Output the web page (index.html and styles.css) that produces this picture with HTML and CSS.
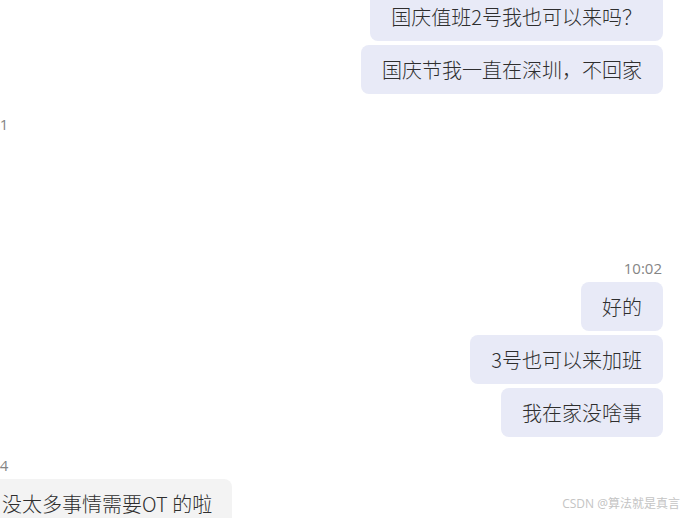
FILE: index.html
```html
<!DOCTYPE html>
<html lang="zh-CN">
<head>
<meta charset="utf-8">
<link rel="stylesheet" href="styles.css">
</head>
<body>
<div class="chat">
  <div class="group right first">
    <div class="bubble mine">国庆值班2号我也可以来吗？</div>
    <div class="bubble mine">国庆节我一直在深圳，不回家</div>
  </div>
  <div class="group left g-one">
    <div class="time">10:01</div>
  </div>
  <div class="group right g-two">
    <div class="time">10:02</div>
    <div class="bubble mine">好的</div>
    <div class="bubble mine">3号也可以来加班</div>
    <div class="bubble mine">我在家没啥事</div>
  </div>
  <div class="group left g-three">
    <div class="time">10:04</div>
    <div class="bubble theirs">没太多事情需要OT 的啦</div>
  </div>
</div>
<div class="watermark">CSDN @算法就是真言</div>
</body>
</html>
```
FILE: styles.css
```css
html, body {
  margin: 0;
  padding: 0;
}
body {
  width: 689px;
  height: 518px;
  overflow: hidden;
  background: #ffffff;
  position: relative;
  font-family: "Open Sans", "Noto Sans CJK SC", sans-serif;
  color: #333333;
}
.chat {
  display: flex;
  flex-direction: column;
  margin-top: -8px;
  padding-right: 26px;
}
.group {
  display: flex;
  flex-direction: column;
  gap: 4px;
}
.group.right {
  align-items: flex-end;
}
.group.left {
  align-items: flex-start;
  margin-left: -19px;
}
.g-one {
  margin-top: 20px;
}
.g-two {
  margin-top: 124px;
}
.g-three {
  margin-top: 18px;
}
.time {
  font-size: 15px;
  line-height: 20px;
  height: 20px;
  color: #858585;
  padding-right: 1px;
}
.group.left .time {
  margin-left: -11px;
}
.bubble {
  font-family: "Noto Sans CJK SC", sans-serif;
  font-weight: 300;
  font-size: 20px;
  line-height: 25px;
  padding: 12px 21px 12px 21px;
  border-radius: 8px;
  white-space: nowrap;
  color: #2e2e2e;
}
.bubble.mine {
  background: #e8eaf7;
}
.bubble.theirs {
  background: #f3f3f3;
  padding-right: 20px;
}
.watermark {
  position: absolute;
  right: 9px;
  bottom: 6px;
  font-size: 12px;
  line-height: 16px;
  color: #c4c4c4;
  font-family: "Open Sans", "Noto Sans CJK SC", sans-serif;
}
```
